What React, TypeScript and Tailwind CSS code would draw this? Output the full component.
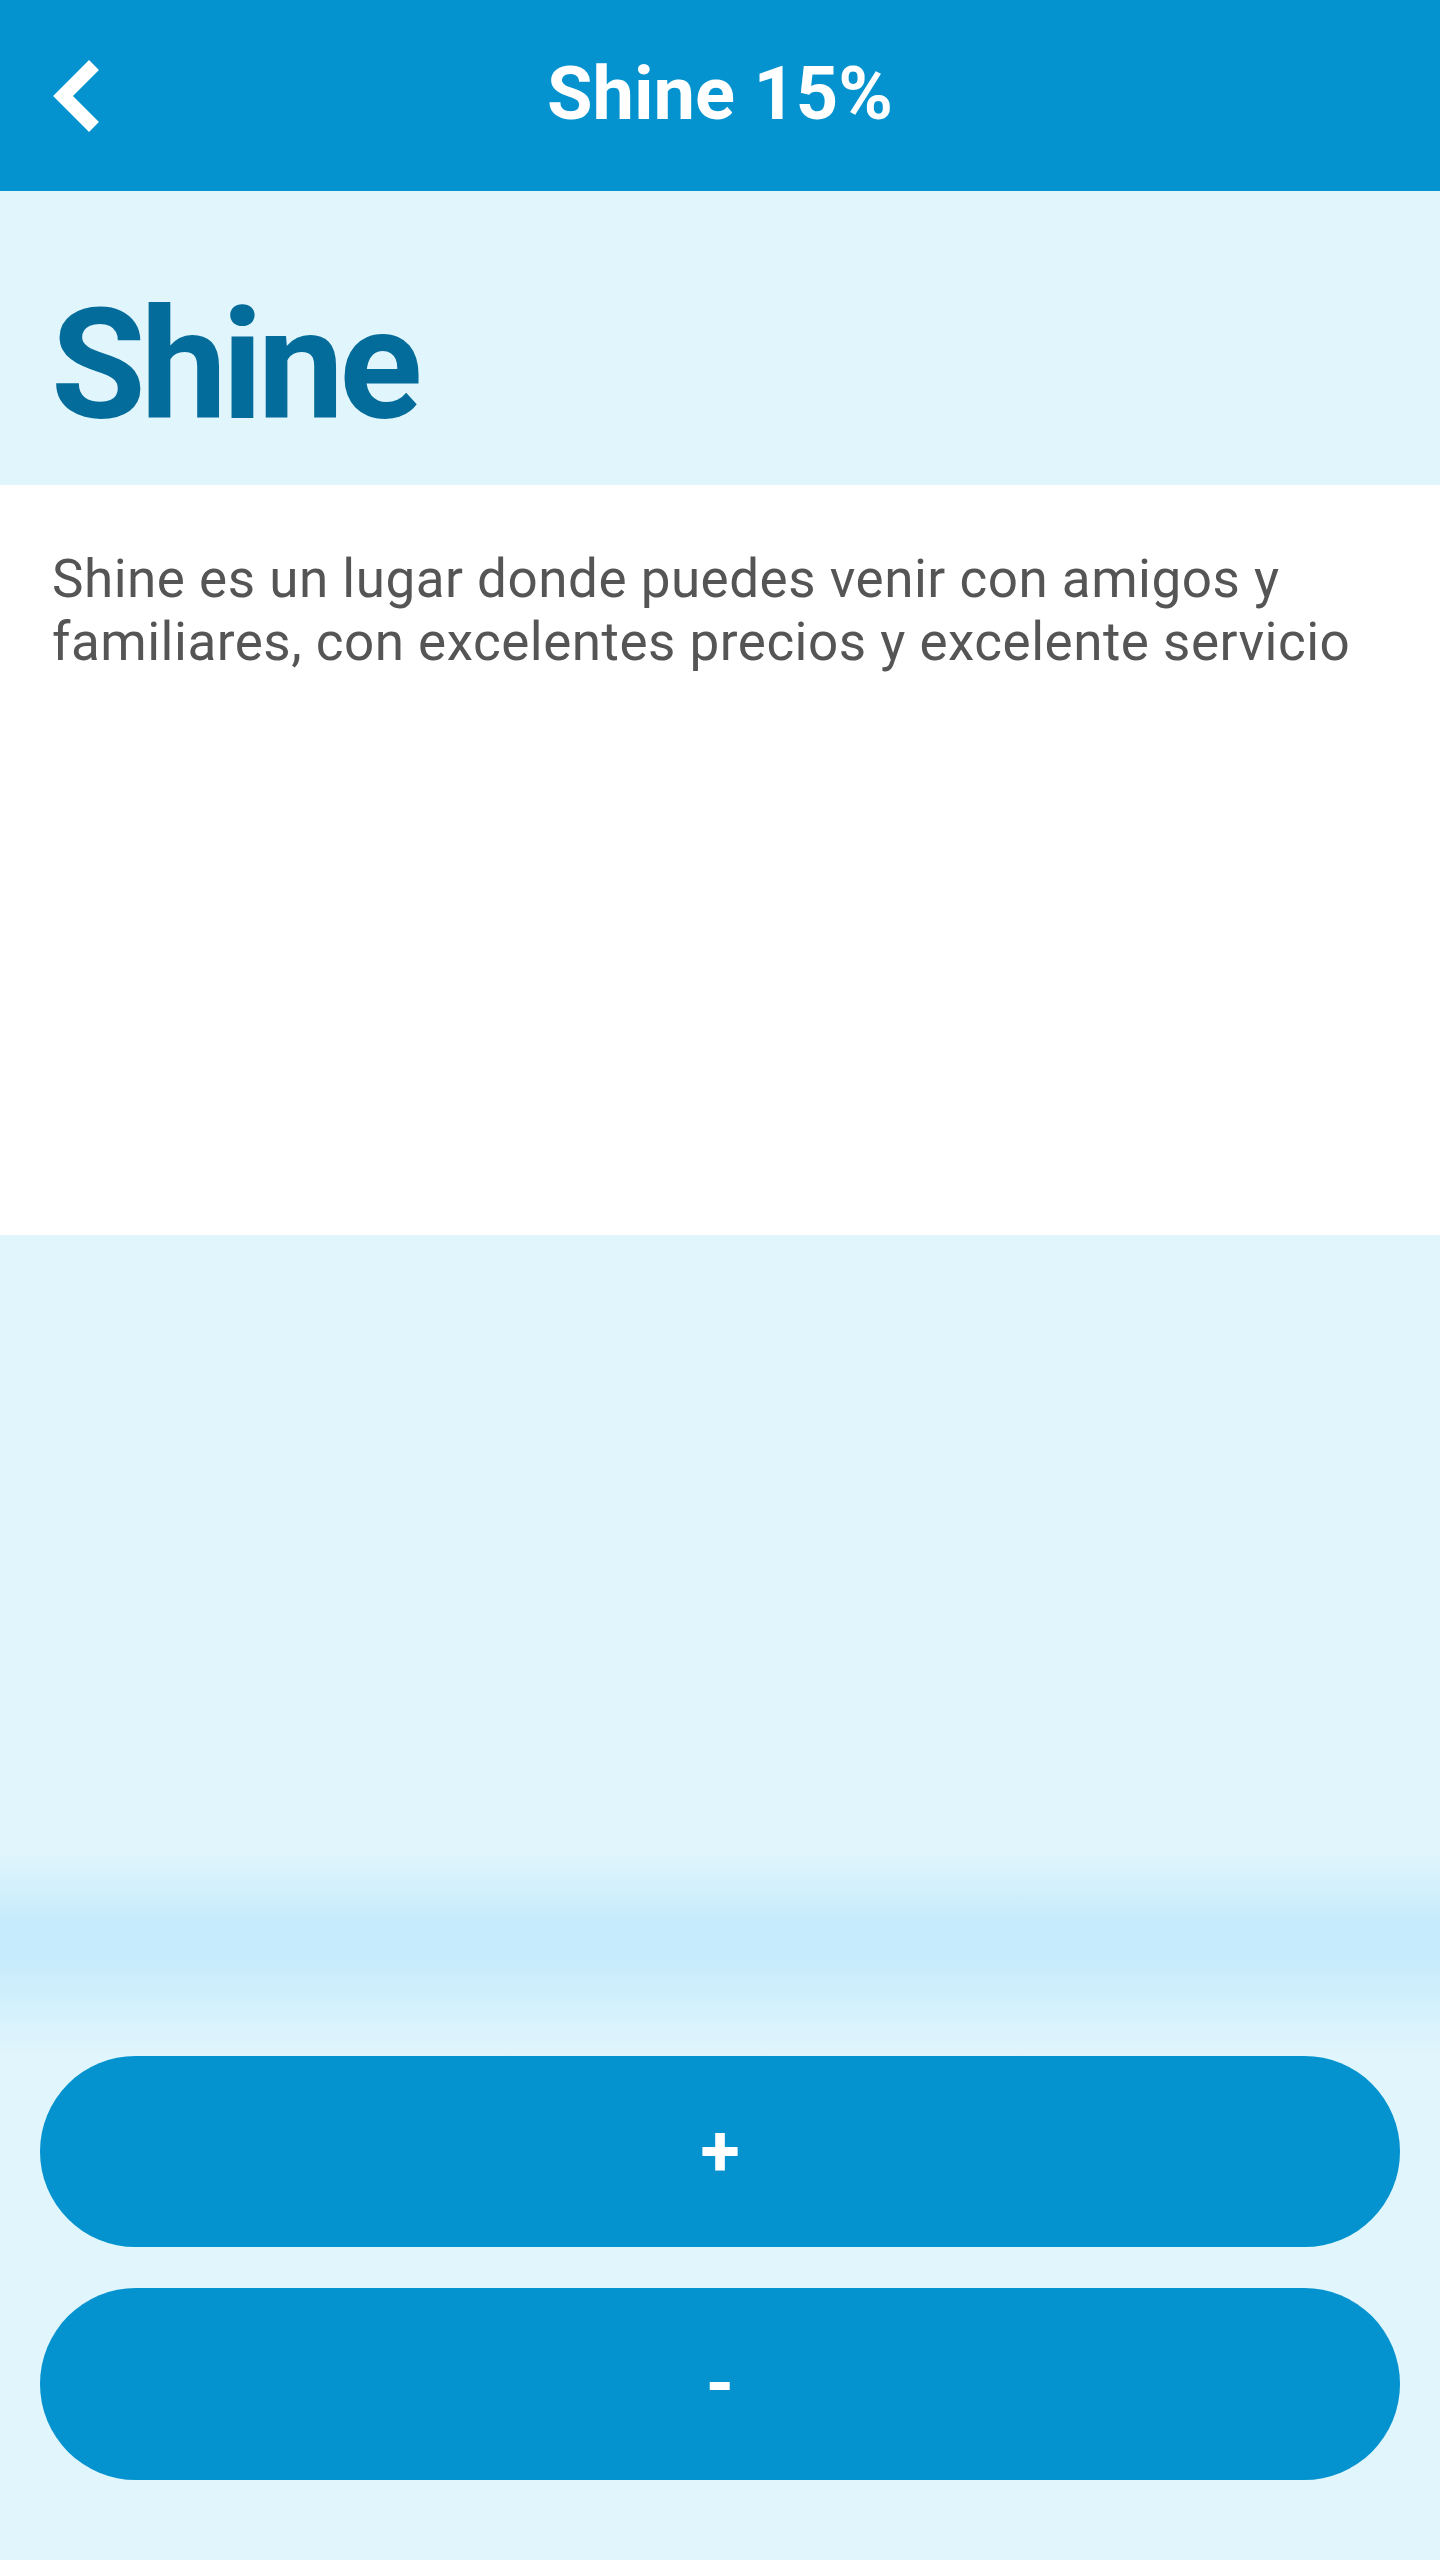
import React from "react";

export default function App() {
  return (
    <div className="w-[1440px] h-[2560px] flex flex-col bg-[#e1f5fc] font-['Roboto','Liberation_Sans',sans-serif] overflow-hidden">
      <header className="relative h-[191px] shrink-0 bg-[#0493cf] flex items-center justify-center">
        <svg
          className="absolute left-0 top-0"
          width="120"
          height="191"
          viewBox="0 0 120 191"
        >
          <polyline
            points="94,65 63,96 94,127"
            fill="none"
            stroke="#ffffff"
            strokeWidth="14"
            strokeLinejoin="miter"
            strokeLinecap="butt"
          />
        </svg>
        <h1 className="text-[74px] leading-none font-bold text-white -mt-[4px]">Shine 15%</h1>
      </header>

      <section className="h-[294px] shrink-0 bg-[#e1f5fc] pl-[51px] pt-[95px]">
        <h2 className="text-[154px] leading-[160px] font-bold text-[#036c9a] tracking-[-5px]">Shine</h2>
      </section>

      <section className="h-[750px] shrink-0 bg-white pl-[52px] pr-[40px] pt-[63px]">
        <p className="text-[53px] leading-[63px] text-[#555555] tracking-[0.5px]">
          Shine es un lugar donde puedes venir con amigos y familiares, con excelentes precios y excelente servicio
        </p>
      </section>

      <div className="flex-1 flex flex-col">
        <div className="h-[615px] shrink-0" />
        <div className="h-[206px] shrink-0 bg-[linear-gradient(to_bottom,#e1f5fc_0%,#c6ebfc_35%,#c6ebfc_52%,#e1f5fc_100%)]" />
        <div className="flex flex-col gap-[41px] px-[40px]">
          <button className="h-[191px] w-full rounded-full bg-[#0493cf] text-white text-[72px] font-bold leading-none flex items-center justify-center">
            +
          </button>
          <button className="h-[192px] w-full rounded-full bg-[#0493cf] text-white text-[72px] font-bold leading-none flex items-center justify-center">
            -
          </button>
        </div>
      </div>
    </div>
  );
}
